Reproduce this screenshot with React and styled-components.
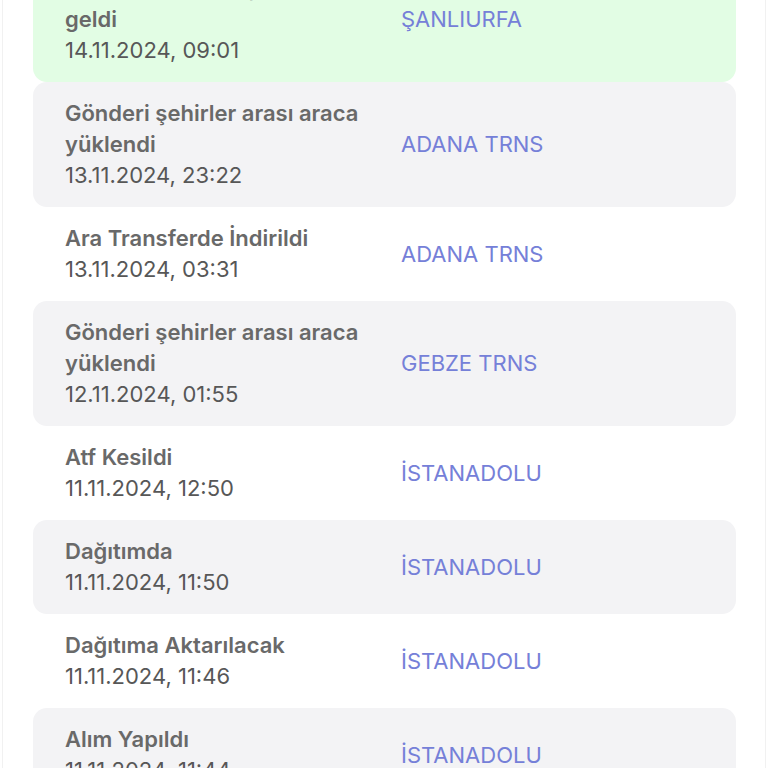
import React from "react";
import styled, { createGlobalStyle } from "styled-components";

const GlobalStyle = createGlobalStyle`
  html, body {
    margin: 0;
    padding: 0;
    background: #fff;
    overflow: hidden;
  }
  body {
    font-family: Inter, "Noto Sans", "Liberation Sans", sans-serif;
    -webkit-font-smoothing: antialiased;
  }
`;

const events = [
  { title: "Gönderi teslimat şubesine geldi", date: "14.11.2024, 09:01", place: "ŞANLIURFA", tone: "green" },
  { title: "Gönderi şehirler arası araca yüklendi", date: "13.11.2024, 23:22", place: "ADANA TRNS", tone: "gray" },
  { title: "Ara Transferde İndirildi", date: "13.11.2024, 03:31", place: "ADANA TRNS", tone: "white" },
  { title: "Gönderi şehirler arası araca yüklendi", date: "12.11.2024, 01:55", place: "GEBZE TRNS", tone: "gray" },
  { title: "Atf Kesildi", date: "11.11.2024, 12:50", place: "İSTANADOLU", tone: "white" },
  { title: "Dağıtımda", date: "11.11.2024, 11:50", place: "İSTANADOLU", tone: "gray" },
  { title: "Dağıtıma Aktarılacak", date: "11.11.2024, 11:46", place: "İSTANADOLU", tone: "white" },
  { title: "Alım Yapıldı", date: "11.11.2024, 11:44", place: "İSTANADOLU", tone: "gray" },
];

const tones = {
  green: "#e2fde4",
  gray: "#f3f3f5",
  white: "transparent",
};

const TrackingHistory = () => {
  return (
    <Panel>
      <List>
        {events.map((e, i) => (
          <Row key={i} tone={e.tone}>
            <Info>
              <Title>{e.title}</Title>
              <Date>{e.date}</Date>
            </Info>
            <Place>{e.place}</Place>
          </Row>
        ))}
      </List>
    </Panel>
  );
};

const Panel = styled.div`
  height: 768px;
  margin: 0 2px;
  padding: 0 29px 0 30px;
  border-left: 1px solid #f1f1f1;
  border-right: 1px solid #f1f1f1;
  overflow: hidden;
`;

const List = styled.div`
  display: flex;
  flex-direction: column;
  margin-top: -43px;
`;

const Row = styled.div`
  display: grid;
  grid-template-columns: 320px 1fr;
  column-gap: 16px;
  align-items: center;
  padding: 16px 32px;
  border-radius: 14px;
  background: ${(p) => tones[p.tone]};
`;

const Info = styled.div`
  display: flex;
  flex-direction: column;
`;

const Title = styled.div`
  font-size: 22px;
  line-height: 31px;
  font-weight: 600;
  color: #696969;
`;

const Date = styled.div`
  font-size: 22px;
  line-height: 31px;
  font-weight: 400;
  color: #575757;
`;

const Place = styled.div`
  font-size: 22px;
  line-height: 31px;
  font-weight: 400;
  color: #7580d8;
`;

const App = () => (
  <>
    <GlobalStyle />
    <TrackingHistory />
  </>
);

export default App;
